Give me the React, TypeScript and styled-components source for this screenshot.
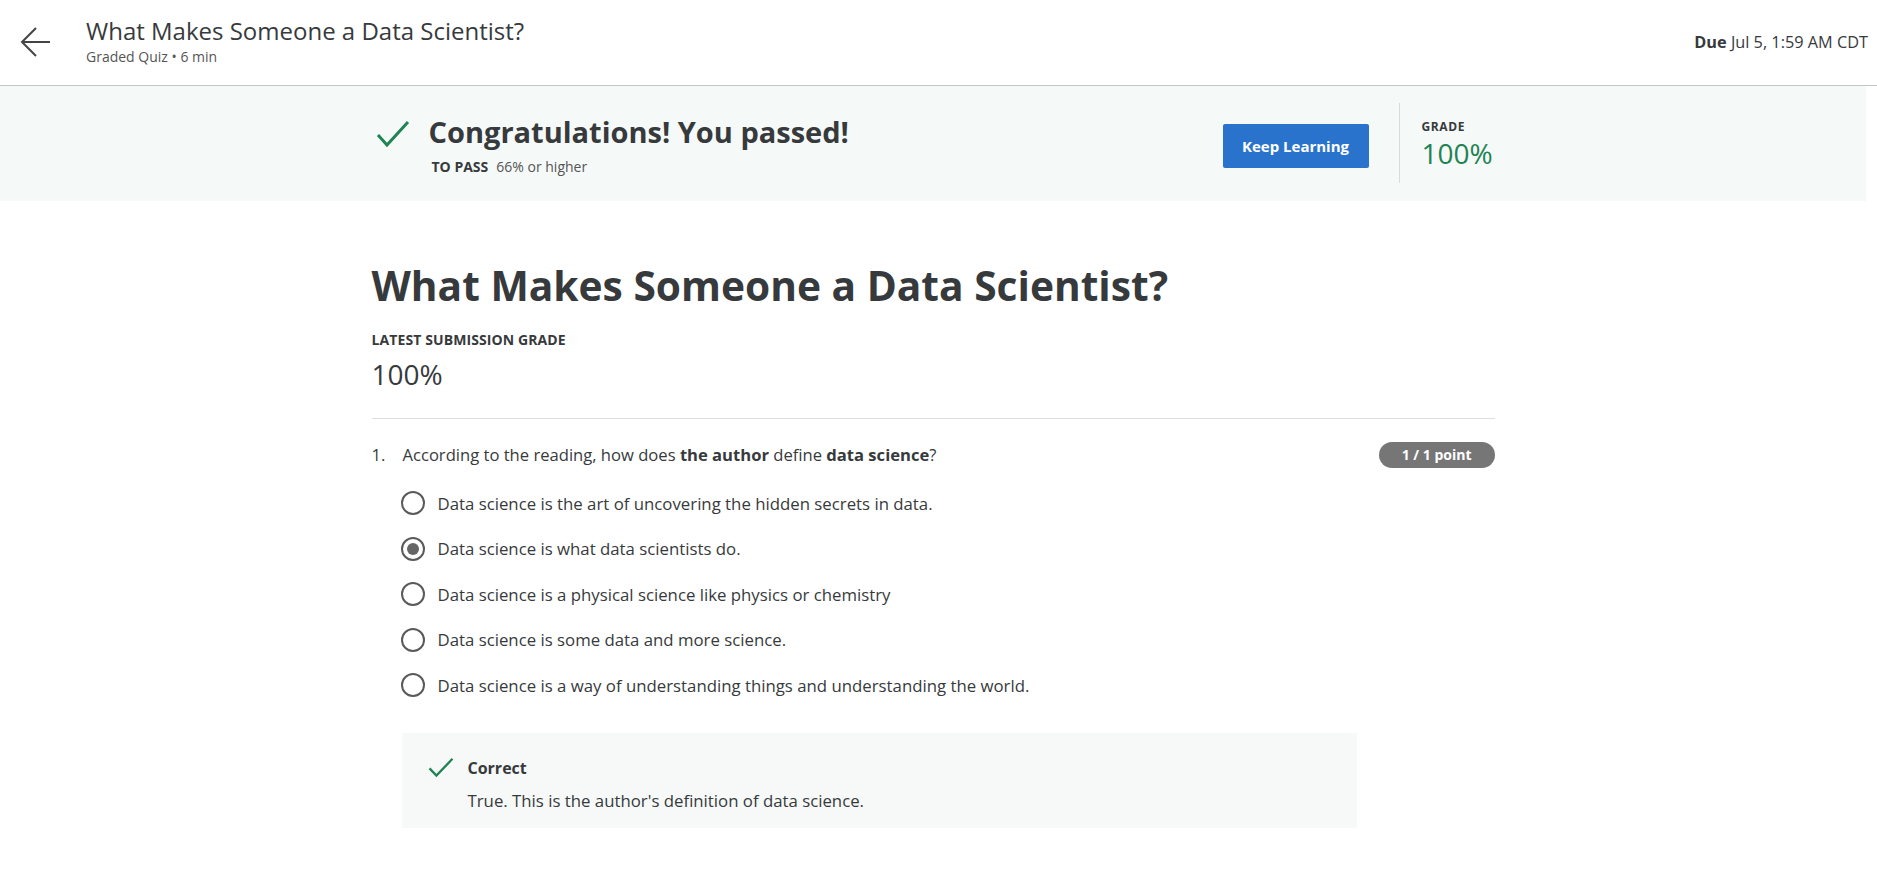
import React from "react";
import styled, { createGlobalStyle } from "styled-components";

const GlobalStyle = createGlobalStyle`
  html, body {
    margin: 0;
    padding: 0;
    background: #ffffff;
  }
  body {
    font-family: "Open Sans", "Noto Sans", "Liberation Sans", sans-serif;
    color: #373a3c;
  }
`;

const Colors = {
  text: "#373a3c",
  green: "#1f8354",
  blue: "#2a73cc",
  mint: "#f5f9f8",
  border: "#c5c5c5",
  pill: "#767676"
};

const Header = styled.header`
  display: flex;
  align-items: flex-start;
  height: 85px;
  border-bottom: 1px solid ${Colors.border};
`;

const BackButton = styled.button`
  width: 86px;
  height: 85px;
  border: none;
  background: none;
  padding: 0 0 0 20px;
  display: flex;
  align-items: flex-start;
  padding-top: 26px;
  cursor: pointer;
  color: #444;
`;

const TitleBlock = styled.div`
  flex: 1;
  padding-top: 14px;
`;

const HeaderTitle = styled.h1`
  margin: 0;
  font-size: 24px;
  font-weight: 400;
  line-height: 34px;
  color: ${Colors.text};
`;

const HeaderSub = styled.div`
  font-size: 14px;
  line-height: 18px;
  color: #555;
`;

const Due = styled.div`
  padding: 31px 9px 0 0;
  font-size: 16.3px;
  line-height: 22px;
  color: ${Colors.text};
  b {
    font-weight: 700;
  }
`;

const Page = styled.div`
  margin-right: 11px;
`;

const Banner = styled.section`
  background: ${Colors.mint};
  height: 115px;
`;

const Column = styled.div`
  width: 1123px;
  margin: 0 auto;
`;

const BannerInner = styled(Column)`
  display: flex;
  align-items: flex-start;
  height: 100%;
`;

const PassBlock = styled.div`
  flex: 1;
  display: flex;
  align-items: flex-start;
  padding-top: 27px;
`;

const CheckWrap = styled.div<{ $size: number }>`
  width: ${(p) => p.$size}px;
  flex-shrink: 0;
  color: ${Colors.green};
  display: flex;
`;

const PassTitle = styled.h2`
  margin: 0;
  font-size: 29px;
  font-weight: 700;
  line-height: 38px;
  color: ${Colors.text};
`;

const PassSub = styled.div`
  margin-top: 7px;
  margin-left: 3px;
  font-size: 14px;
  line-height: 18px;
  color: #555;
  b {
    font-weight: 700;
    color: ${Colors.text};
    margin-right: 8px;
  }
`;

const KeepButton = styled.button`
  margin-top: 38px;
  width: 146px;
  height: 44px;
  border: none;
  border-radius: 2px;
  background: ${Colors.blue};
  color: #fff;
  font-family: inherit;
  font-size: 15px;
  font-weight: 700;
  cursor: pointer;
`;

const VDivider = styled.div`
  width: 1px;
  height: 80px;
  margin: 17px 22px 0 30px;
  background: #d9dcdc;
`;

const GradeBlock = styled.div`
  padding-top: 33px;
  width: 73px;
`;

const SmallLabel = styled.div`
  font-size: 12px;
  font-weight: 700;
  line-height: 16px;
  letter-spacing: 0.6px;
  text-transform: uppercase;
  color: ${Colors.text};
`;

const GradeValue = styled.div<{ $green?: boolean }>`
  font-size: 28px;
  font-weight: 400;
  line-height: 36px;
  color: ${(p) => (p.$green ? Colors.green : Colors.text)};
`;

const Main = styled(Column)`
  padding-top: 56px;
`;

const QuizTitle = styled.h1`
  margin: 0;
  font-size: 40.7px;
  font-weight: 700;
  line-height: 56px;
  color: ${Colors.text};
`;

const Submission = styled.div`
  margin-top: 19px;
  padding-bottom: 26px;
  border-bottom: 1px solid #dedede;
  ${SmallLabel} {
    font-size: 14px;
    letter-spacing: 0.1px;
  }
  ${GradeValue} {
    margin-top: 8px;
  }
`;

const QuestionRow = styled.div`
  display: flex;
  align-items: center;
  margin-top: 23px;
  font-size: 16.6px;
  line-height: 26px;
`;

const QNumber = styled.span`
  width: 31px;
  flex-shrink: 0;
`;

const QText = styled.span`
  flex: 1;
  b {
    font-weight: 700;
  }
`;

const Pill = styled.span`
  background: ${Colors.pill};
  color: #fff;
  font-size: 14px;
  font-weight: 700;
  line-height: 26px;
  height: 26px;
  padding: 0 23px;
  border-radius: 13px;
`;

const Options = styled.div`
  margin: 23px 0 0 29px;
  display: flex;
  flex-direction: column;
  gap: 21.5px;
`;

const Option = styled.label`
  display: flex;
  align-items: center;
  gap: 13px;
  height: 24px;
  font-size: 16.8px;
  color: ${Colors.text};
`;

const Radio = styled.span<{ $checked?: boolean }>`
  width: 24px;
  height: 24px;
  box-sizing: border-box;
  border: 2px solid #5a5a5a;
  border-radius: 50%;
  display: flex;
  align-items: center;
  justify-content: center;
  &::after {
    content: "";
    display: ${(p) => (p.$checked ? "block" : "none")};
    width: 12px;
    height: 12px;
    border-radius: 50%;
    background: #666;
  }
`;

const Feedback = styled.div`
  margin: 36px 0 0 30px;
  width: 955px;
  height: 95px;
  box-sizing: border-box;
  background: #f6f9f8;
  display: flex;
  padding: 24px 0 0 26px;
`;

const FeedbackTitle = styled.div`
  font-size: 16px;
  font-weight: 700;
  line-height: 22px;
`;

const FeedbackText = styled.div`
  margin-top: 11px;
  font-size: 16.8px;
  line-height: 22px;
`;

const Check = ({ w, h }: { w: number; h: number }) => (
  <svg width={w} height={h} viewBox="0 0 34 28" fill="none">
    <path d="M2 14.5 L11 24 L32 2" stroke="currentColor" strokeWidth="3" />
  </svg>
);

const options = [
  "Data science is the art of uncovering the hidden secrets in data.",
  "Data science is what data scientists do.",
  "Data science is a physical science like physics or chemistry",
  "Data science is some data and more science.",
  "Data science is a way of understanding things and understanding the world."
];

export default function App() {
  return (
    <>
      <GlobalStyle />
      <Header>
        <BackButton aria-label="Back">
          <svg width="32" height="32" viewBox="0 0 32 32" fill="none">
            <path
              d="M2 16 H30 M16 2 L2 16 L16 30"
              stroke="currentColor"
              strokeWidth="2"
            />
          </svg>
        </BackButton>
        <TitleBlock>
          <HeaderTitle>What Makes Someone a Data Scientist?</HeaderTitle>
          <HeaderSub>Graded Quiz • 6 min</HeaderSub>
        </TitleBlock>
        <Due>
          <b>Due</b> Jul 5, 1:59 AM CDT
        </Due>
      </Header>

      <Page>
        <Banner>
          <BannerInner>
            <PassBlock>
              <CheckWrap $size={57}>
                <svg width="34" height="30" viewBox="0 0 34 30" fill="none" style={{ marginTop: 6, marginLeft: 4 }}>
                  <path d="M2 16 L11 26 L32 3" stroke="currentColor" strokeWidth="3" />
                </svg>
              </CheckWrap>
              <div>
                <PassTitle>Congratulations! You passed!</PassTitle>
                <PassSub>
                  <b>TO PASS</b>66% or higher
                </PassSub>
              </div>
            </PassBlock>
            <KeepButton>Keep Learning</KeepButton>
            <VDivider />
            <GradeBlock>
              <SmallLabel>Grade</SmallLabel>
              <GradeValue $green>100%</GradeValue>
            </GradeBlock>
          </BannerInner>
        </Banner>

        <Main>
          <QuizTitle>What Makes Someone a Data Scientist?</QuizTitle>
          <Submission>
            <SmallLabel>Latest Submission Grade</SmallLabel>
            <GradeValue>100%</GradeValue>
          </Submission>

          <QuestionRow>
            <QNumber>1.</QNumber>
            <QText>
              According to the reading, how does <b>the author</b> define{" "}
              <b>data science</b>?
            </QText>
            <Pill>1 / 1 point</Pill>
          </QuestionRow>

          <Options>
            {options.map((o, i) => (
              <Option key={o}>
                <Radio $checked={i === 1} />
                {o}
              </Option>
            ))}
          </Options>

          <Feedback>
            <CheckWrap $size={40}>
              <Check w={26} h={22} />
            </CheckWrap>
            <div>
              <FeedbackTitle>Correct</FeedbackTitle>
              <FeedbackText>True. This is the author's definition of data science.</FeedbackText>
            </div>
          </Feedback>
        </Main>
      </Page>
    </>
  );
}
